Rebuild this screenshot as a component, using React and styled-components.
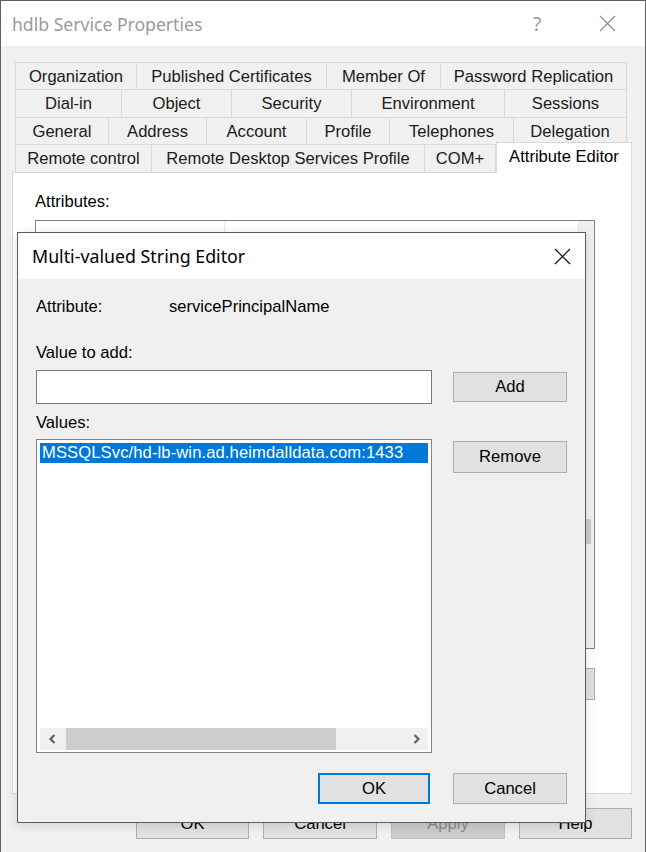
import React from 'react';
import styled, { createGlobalStyle } from 'styled-components';

const GlobalStyle = createGlobalStyle`
  html, body { margin: 0; padding: 0; background: #f0f0f0; }
  body { font-family: "Liberation Sans", Arial, sans-serif; font-size: 16.6px; color: #000; }
  * { box-sizing: border-box; }
`;

const Window = styled.div`
  position: relative;
  width: 646px;
  height: 852px;
  background: #f0f0f0;
  border: 1px solid #5f5f5f;
  border-bottom: none;
  overflow: hidden;
  display: flex;
  flex-direction: column;
`;

const TitleBar = styled.div`
  flex: 0 0 ${p => p.$h}px;
  background: #fff;
  display: flex;
  align-items: center;
  padding-left: ${p => p.$pad}px;
  font-family: "Noto Sans", "Open Sans", sans-serif;
  font-size: ${p => p.$fs}px;
  color: ${p => (p.$active ? '#000' : '#9a9a9a')};
`;

const TitleText = styled.span`
  flex: 1;
  white-space: nowrap;
`;

const Controls = styled.div`
  display: flex;
  gap: ${p => p.$gap}px;
  padding-right: ${p => p.$pad}px;
  align-self: stretch;
`;

const CaptionBtn = styled.div`
  width: 46px;
  display: flex;
  align-items: center;
  justify-content: center;
  font-family: "Noto Sans", sans-serif;
  font-size: 19px;
  color: inherit;
`;

const Body = styled.div`
  flex: 1;
  display: flex;
  flex-direction: column;
  padding: 16px 13px 0 11px;
`;

const Tabs = styled.div`
  display: flex;
  flex-direction: column;
  margin-left: 3px;
  position: relative;
  z-index: 2;
`;

const TabRow = styled.div`
  display: flex;
  height: ${p => p.$h}px;
`;

const Tab = styled.div`
  flex: 0 0 ${p => p.$w}px;
  display: flex;
  align-items: center;
  justify-content: center;
  background: #f0f0f0;
  border-top: 1px solid #d9d9d9;
  border-right: 1px solid #d9d9d9;
  border-left: ${p => (p.$first ? '1px solid #d9d9d9' : 'none')};
  color: #1a1a1a;
  white-space: nowrap;
  padding-top: 1px;
`;

const ActiveTab = styled.div`
  flex: 0 0 ${p => p.$w}px;
  align-self: flex-start;
  height: 31px;
  margin-top: -2px;
  display: flex;
  align-items: center;
  justify-content: center;
  background: #fff;
  border: 1px solid #d9d9d9;
  border-bottom: none;
  color: #000;
  white-space: nowrap;
  padding-bottom: 2px;
`;

const Panel = styled.div`
  height: 622px;
  width: 620px;
  background: #fff;
  border: 1px solid #d9d9d9;
  padding: 20px 36px 0 22px;
  display: flex;
  flex-direction: column;
`;

const Label = styled.div`
  line-height: 18px;
  height: 18px;
  color: #000;
  margin-top: ${p => p.$mt || 0}px;
  white-space: nowrap;
`;

const AttrList = styled.div`
  margin-top: 9px;
  height: 429px;
  border: 1px solid #828282;
  background: #fff;
  display: grid;
  grid-template-columns: 1fr 17px;
`;

const ListMain = styled.div`
  display: flex;
  flex-direction: column;
`;

const HeaderRow = styled.div`
  display: flex;
  height: 22px;
`;

const HeaderCell = styled.div`
  flex: 0 0 ${p => p.$w}px;
  border-right: 1px solid #e5e5e5;
`;

const VScroll = styled.div`
  background: #f0f0f0;
  padding: 0 3px 0 2px;
`;

const VThumb = styled.div`
  margin-top: ${p => p.$top}px;
  height: 25px;
  background: #cdcdcd;
`;

const PanelButtons = styled.div`
  margin-top: 19px;
  display: flex;
  justify-content: flex-end;
`;

const Button = styled.div`
  width: ${p => p.$w}px;
  height: ${p => p.$h || 31}px;
  margin-top: ${p => p.$mt || 0}px;
  flex: 0 0 auto;
  display: flex;
  align-items: center;
  justify-content: center;
  background: ${p => (p.$disabled ? '#cccccc' : '#e1e1e1')};
  border: ${p => (p.$default ? '2px solid #0078d7' : p.$disabled ? '1px solid #bfbfbf' : '1px solid #adadad')};
  color: ${p => (p.$disabled ? '#8a8a8a' : '#000')};
  white-space: nowrap;
`;

const ButtonBar = styled.div`
  margin-top: 14px;
  display: flex;
  justify-content: flex-end;
  gap: 14px;
`;

const Dialog = styled.div`
  position: absolute;
  left: 16px;
  top: 231px;
  width: 569px;
  height: 591px;
  background: #f0f0f0;
  border: 1px solid #5a5a5a;
  z-index: 5;
  display: flex;
  flex-direction: column;
  box-shadow: 0 2px 10px rgba(0, 0, 0, 0.12);
`;

const DialogBody = styled.div`
  flex: 1;
  display: flex;
  flex-direction: column;
  padding: 19px 18px 18px 18px;
`;

const AttrRow = styled.div`
  display: flex;
  line-height: 18px;
  height: 18px;
`;

const AttrKey = styled.span`
  flex: 0 0 133px;
`;

const FieldRow = styled.div`
  display: flex;
  align-items: ${p => p.$align || 'center'};
  gap: 21px;
  margin-top: ${p => p.$mt}px;
`;

const TextInput = styled.div`
  width: 396px;
  height: 34px;
  background: #fff;
  border: 1px solid #7a7a7a;
`;

const ValuesList = styled.div`
  width: 396px;
  height: 314px;
  background: #fff;
  border: 1px solid #828282;
  padding: 3px 3px 2px 3px;
  display: flex;
  flex-direction: column;
`;

const SelectedItem = styled.div`
  height: 20px;
  line-height: 20px;
  background: #0078d7;
  color: #fff;
  padding-left: 2px;
  white-space: nowrap;
  letter-spacing: 0.1px;
`;

const Spacer = styled.div`
  flex: 1;
`;

const HScroll = styled.div`
  height: 22px;
  background: #f0f0f0;
  display: flex;
  align-items: stretch;
`;

const ArrowBtn = styled.div`
  flex: 0 0 24px;
  display: flex;
  align-items: center;
  justify-content: center;
`;

const Track = styled.div`
  flex: 1;
  display: flex;
`;

const HThumb = styled.div`
  margin-left: 2px;
  width: ${p => p.$w}px;
  background: #cdcdcd;
`;

const Footer = styled.div`
  margin-top: 20px;
  display: flex;
  justify-content: flex-end;
  gap: 23px;
`;

const CloseIcon = ({ color = '#000', size = 17 }) => (
  <svg width={size} height={size} viewBox="0 0 17 17">
    <path d="M1 1 L16 16 M16 1 L1 16" stroke={color} strokeWidth="1.2" fill="none" />
  </svg>
);

const Chevron = ({ dir }) => (
  <svg width="9" height="12" viewBox="0 0 9 12">
    <path
      d={dir === 'left' ? 'M6.5 2 L2.5 6 L6.5 10' : 'M2.5 2 L6.5 6 L2.5 10'}
      stroke="#606060"
      strokeWidth="2.2"
      fill="none"
    />
  </svg>
);

const rows = [
  { h: 27, tabs: [['Organization', 122], ['Published Certificates', 190], ['Member Of', 114], ['Password Replication', 186]] },
  { h: 28, tabs: [['Dial-in', 107], ['Object', 110], ['Security', 120], ['Environment', 153], ['Sessions', 122]] },
  { h: 27, tabs: [['General', 94], ['Address', 98], ['Account', 100], ['Profile', 83], ['Telephones', 124], ['Delegation', 113]] },
];

const lastRow = [['Remote control', 137], ['Remote Desktop Services Profile', 273], ['COM+', 71]];

export default function App() {
  return (
    <>
      <GlobalStyle />
      <Window>
        <TitleBar $h={45} $pad={11} $fs={17.6}>
          <TitleText>hdlb Service Properties</TitleText>
          <Controls $gap={24} $pad={15}>
            <CaptionBtn>?</CaptionBtn>
            <CaptionBtn>
              <CloseIcon color="#8a8a8a" />
            </CaptionBtn>
          </Controls>
        </TitleBar>
        <Body>
          <Tabs>
            {rows.map((r, i) => (
              <TabRow key={i} $h={r.h}>
                {r.tabs.map(([t, w], j) => (
                  <Tab key={t} $w={w} $first={j === 0}>{t}</Tab>
                ))}
              </TabRow>
            ))}
            <TabRow $h={28}>
              {lastRow.map(([t, w], j) => (
                <Tab key={t} $w={w} $first={j === 0}>{t}</Tab>
              ))}
              <ActiveTab $w={136}>Attribute Editor</ActiveTab>
            </TabRow>
          </Tabs>
          <Panel>
            <Label>Attributes:</Label>
            <AttrList>
              <ListMain>
                <HeaderRow>
                  <HeaderCell $w={189} />
                </HeaderRow>
              </ListMain>
              <VScroll>
                <VThumb $top={298} />
              </VScroll>
            </AttrList>
            <PanelButtons>
              <Button $w={94} $h={32}>Edit</Button>
            </PanelButtons>
          </Panel>
          <ButtonBar>
            <Button $w={113}>OK</Button>
            <Button $w={114}>Cancel</Button>
            <Button $w={114} $disabled>Apply</Button>
            <Button $w={113}>Help</Button>
          </ButtonBar>
        </Body>

        <Dialog>
          <TitleBar $h={46} $pad={14} $fs={17.8} $active>
            <TitleText>Multi-valued String Editor</TitleText>
            <Controls $gap={0} $pad={0}>
              <CaptionBtn>
                <CloseIcon color="#111" />
              </CaptionBtn>
            </Controls>
          </TitleBar>
          <DialogBody>
            <AttrRow>
              <AttrKey>Attribute:</AttrKey>
              <span>servicePrincipalName</span>
            </AttrRow>
            <Label $mt={28}>Value to add:</Label>
            <FieldRow $mt={8}>
              <TextInput />
              <Button $w={114} $h={30}>Add</Button>
            </FieldRow>
            <Label $mt={10}>Values:</Label>
            <FieldRow $mt={7} $align="flex-start">
              <ValuesList>
                <SelectedItem>MSSQLSvc/hd-lb-win.ad.heimdalldata.com:1433</SelectedItem>
                <Spacer />
                <HScroll>
                  <ArrowBtn><Chevron dir="left" /></ArrowBtn>
                  <Track>
                    <HThumb $w={270} />
                  </Track>
                  <ArrowBtn><Chevron dir="right" /></ArrowBtn>
                </HScroll>
              </ValuesList>
              <Button $w={114} $h={32} $mt={2}>Remove</Button>
            </FieldRow>
            <Footer>
              <Button $w={112} $default>OK</Button>
              <Button $w={114}>Cancel</Button>
            </Footer>
          </DialogBody>
        </Dialog>
      </Window>
    </>
  );
}
